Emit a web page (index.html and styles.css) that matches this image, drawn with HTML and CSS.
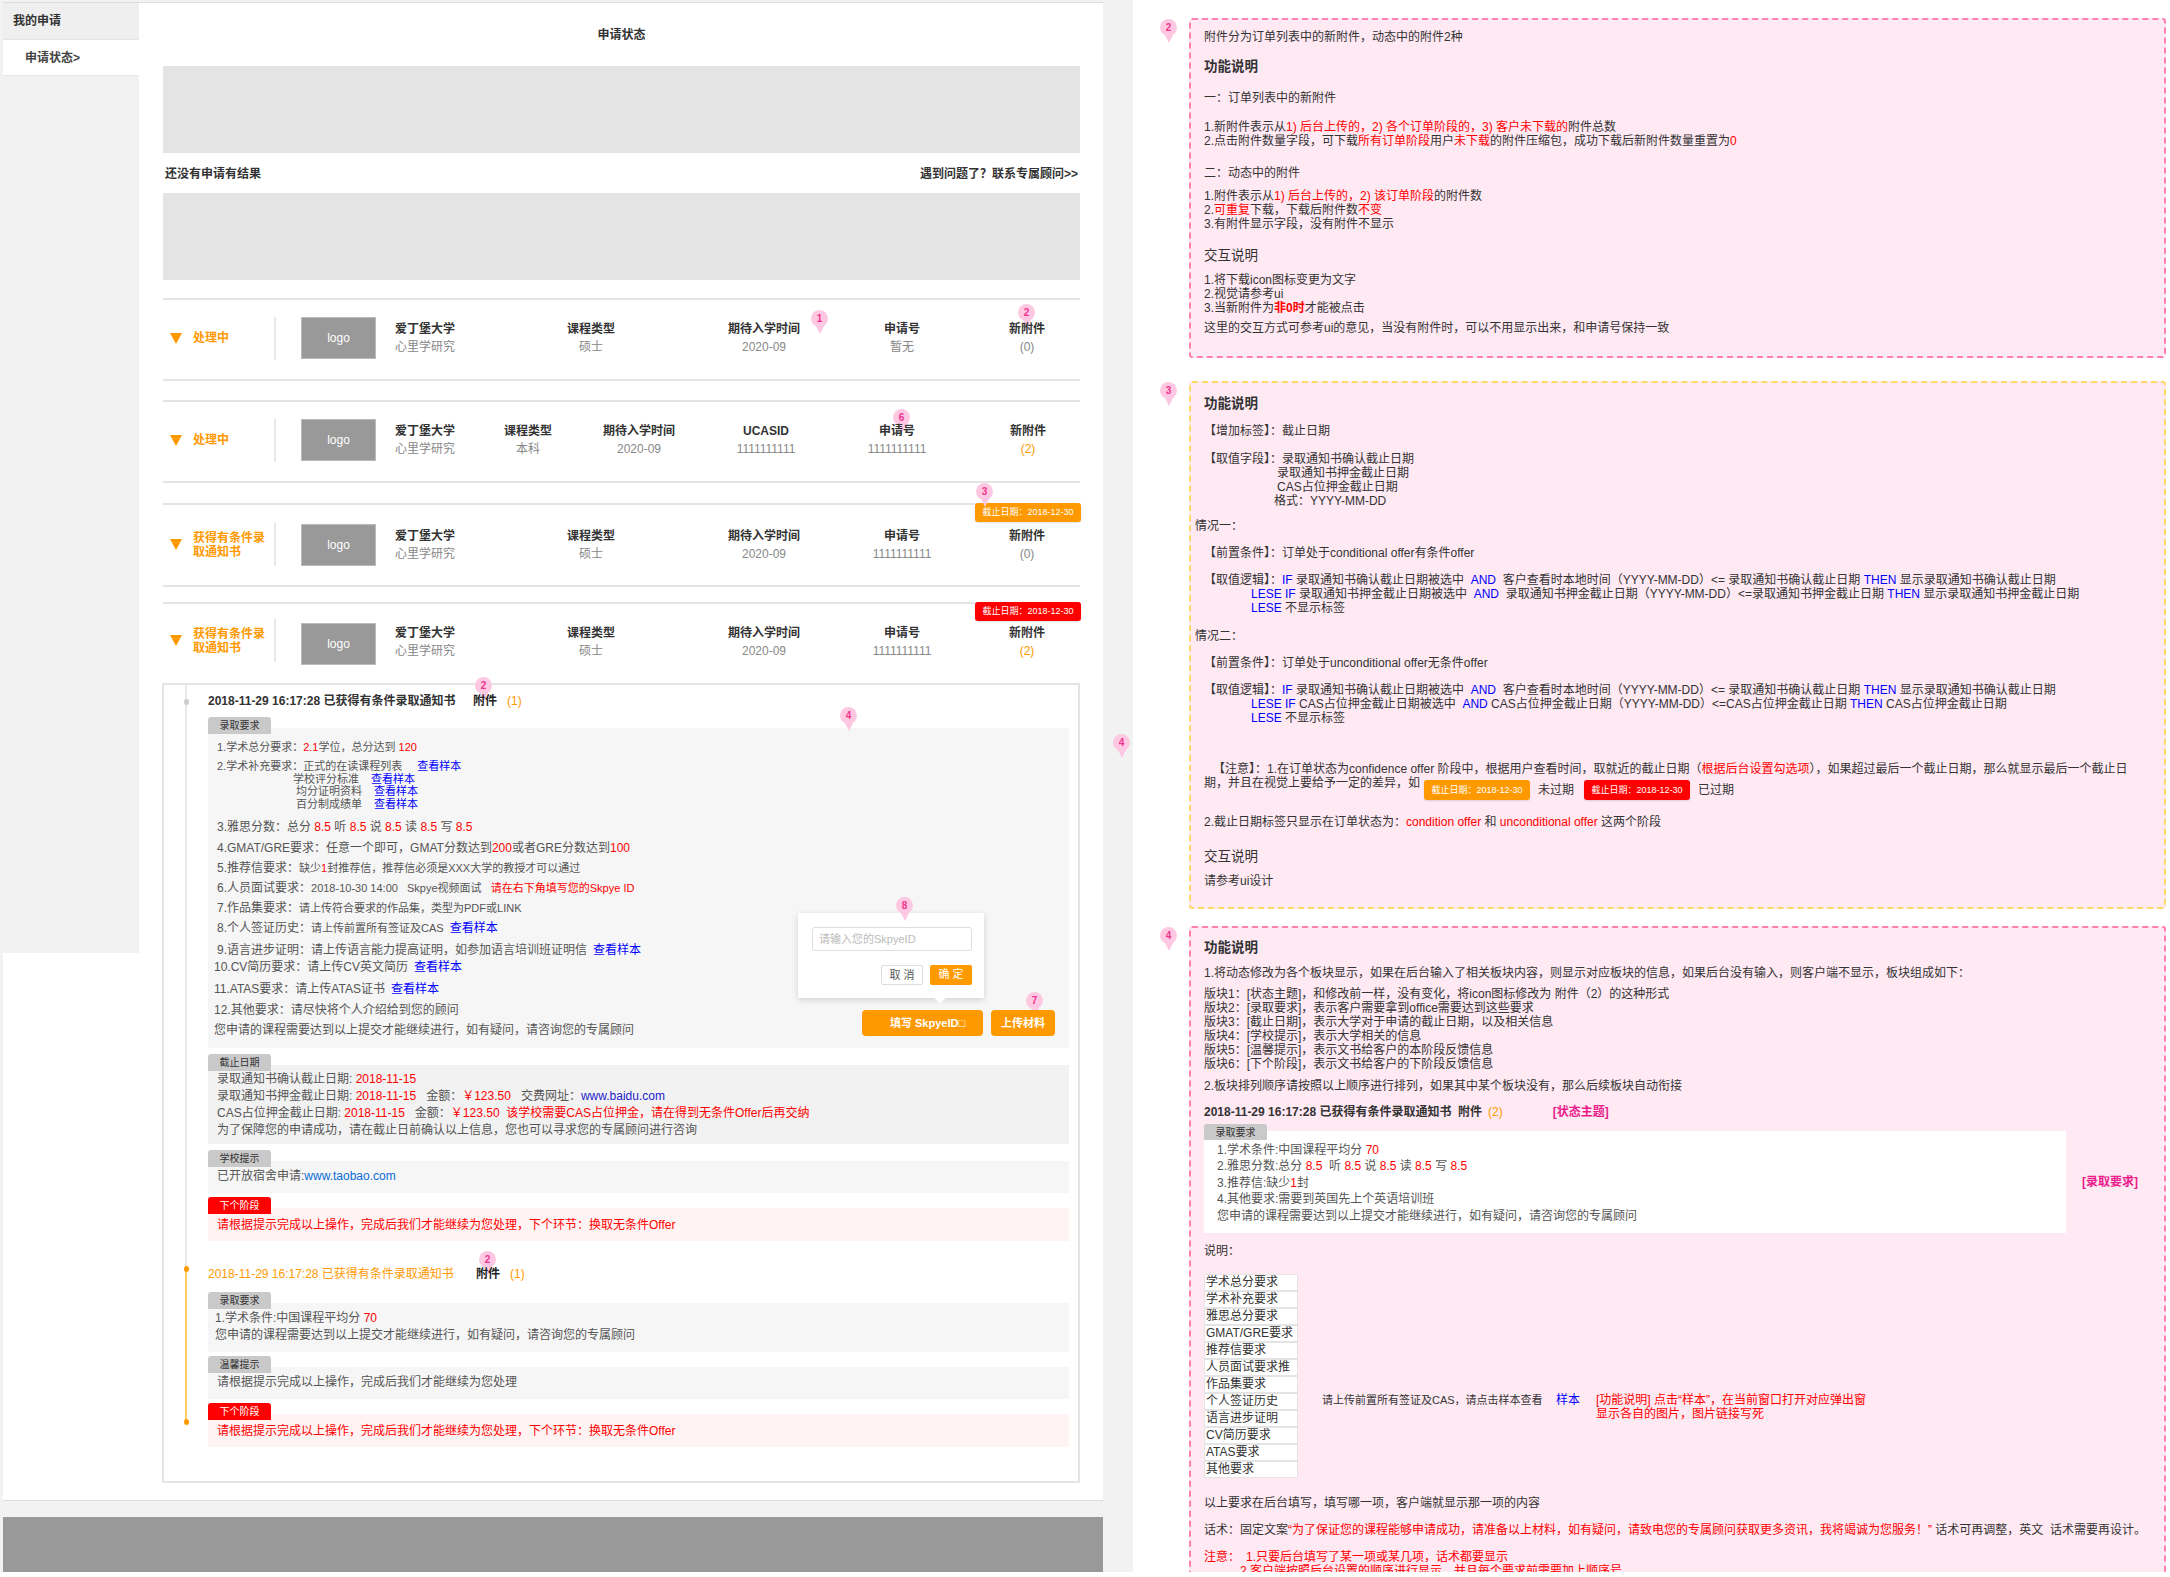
FILE: index.html
```html
<!DOCTYPE html>
<html lang="zh-CN">
<head>
    <meta charset="UTF-8">
    <title>申请状态</title>
    <link rel="stylesheet" href="styles.css">
</head>
<body>
<div class="page">
    <div class="proto">
        <div class="panel">
            <aside class="sidebar">
                <div class="side-head">我的申请</div>
                <div class="side-item">申请状态&gt;</div>
            </aside>
            <main class="content">
                <h1 class="title">申请状态</h1>
                <div class="banner"></div>
                <div class="summary">
                    <span>还没有申请有结果</span>
                    <span>遇到问题了&#xFF1F;联系专属顾问&gt;&gt;</span>
                </div>
                <div class="banner"></div>

                <section class="row row-a row-first">
                    <div class="status"><i class="tri"></i><span>处理中</span></div>
                    <div class="logo">logo</div>
                    <div class="cell cell-left"><b>爱丁堡大学</b><span>心里学研究</span></div>
                    <div class="cell"><b>课程类型</b><span>硕士</span></div>
                    <div class="cell"><b>期待入学时间</b><span>2020-09</span></div>
                    <div class="cell"><b>申请号</b><span>暂无</span></div>
                    <div class="cell cell-last"><b>新附件</b><span>(0)</span></div>
                    <div class="pin pin-r1a">1</div>
                    <div class="pin pin-r1b">2</div>
                </section>

                <section class="row row-b">
                    <div class="status"><i class="tri"></i><span>处理中</span></div>
                    <div class="logo">logo</div>
                    <div class="cell cell-left"><b>爱丁堡大学</b><span>心里学研究</span></div>
                    <div class="cell"><b>课程类型</b><span>本科</span></div>
                    <div class="cell"><b>期待入学时间</b><span>2020-09</span></div>
                    <div class="cell"><b>UCASID</b><span>1111111111</span></div>
                    <div class="cell"><b>申请号</b><span>1111111111</span></div>
                    <div class="cell cell-last"><b>新附件</b><span class="orange">(2)</span></div>
                    <div class="pin pin-r2">6</div>
                </section>

                <section class="row row-a row-tall">
                    <div class="status"><i class="tri"></i><span>获得有条件录<br>取通知书</span></div>
                    <div class="logo">logo</div>
                    <div class="cell cell-left"><b>爱丁堡大学</b><span>心里学研究</span></div>
                    <div class="cell"><b>课程类型</b><span>硕士</span></div>
                    <div class="cell"><b>期待入学时间</b><span>2020-09</span></div>
                    <div class="cell"><b>申请号</b><span>1111111111</span></div>
                    <div class="cell cell-last"><b>新附件</b><span>(0)</span></div>
                    <div class="due due-orange due-corner">截止日期&#xFF1A;2018-12-30</div>
                    <div class="pin pin-r3">3</div>
                </section>

                <section class="row row-a row-open">
                    <div class="status"><i class="tri"></i><span>获得有条件录<br>取通知书</span></div>
                    <div class="logo">logo</div>
                    <div class="cell cell-left"><b>爱丁堡大学</b><span>心里学研究</span></div>
                    <div class="cell"><b>课程类型</b><span>硕士</span></div>
                    <div class="cell"><b>期待入学时间</b><span>2020-09</span></div>
                    <div class="cell"><b>申请号</b><span>1111111111</span></div>
                    <div class="cell cell-last"><b>新附件</b><span class="orange">(2)</span></div>
                    <div class="due due-red due-corner">截止日期&#xFF1A;2018-12-30</div>
                </section>

                <section class="detail">
                    <div class="pin pin-d1">2</div>
                    <div class="pin pin-d2">4</div>
                    <div class="pin pin-d3">2</div>

                    <div class="event">
                        <i class="dot dot-gray"></i>
                        <div class="event-head">
                            <span class="event-time">2018-11-29 16:17:28 已获得有条件录取通知书</span>
                            <b class="attach">附件</b><span class="orange">(1)</span>
                        </div>

                        <div class="tag">录取要求</div>
                        <div class="block block-req">
                            <p class="s11">1.学术总分要求&#xFF1A;<em>2.1</em>学位&#xFF0C;总分达到 <em>120</em></p>
                            <p class="s11 tight mt-6">2.学术补充要求&#xFF1A;正式的在读课程列表<a class="lnk-1">查看样本</a><br>
                                <span class="ind-1">学校评分标准</span><a class="lnk-2">查看样本</a><br>
                                <span class="ind-2">均分证明资料</span><a class="lnk-2">查看样本</a><br>
                                <span class="ind-2">百分制成绩单</span><a class="lnk-2">查看样本</a></p>
                            <p class="mt-9">3.雅思分数&#xFF1A;总分 <em>8.5</em> 听 <em>8.5</em> 说 <em>8.5</em> 读 <em>8.5</em> 写 <em>8.5</em></p>
                            <p class="mt-7">4.GMAT/GRE要求&#xFF1A;任意一个即可&#xFF0C;GMAT分数达到<em>200</em>或者GRE分数达到<em>100</em></p>
                            <p class="mt-6">5.推荐信要求&#xFF1A;<span class="s11">缺少<em>1</em>封推荐信&#xFF0C;推荐信必须是XXX大学的教授才可以通过</span></p>
                            <p class="mt-6">6.人员面试要求&#xFF1A;<span class="s11">2018-10-30 14:00 &nbsp;&nbsp;Skpye视频面试 &nbsp;&nbsp;<em>请在右下角填写您的Skpye ID</em></span></p>
                            <p class="mt-6">7.作品集要求&#xFF1A;<span class="s11">请上传符合要求的作品集&#xFF0C;类型为PDF或LINK</span></p>
                            <p class="mt-6">8.个人签证历史&#xFF1A;<span class="s11">请上传前置所有签证及CAS</span><a class="lnk-3">查看样本</a></p>
                            <p class="mt-8">9.语言进步证明&#xFF1A;请上传语言能力提高证明&#xFF0C;如参加语言培训班证明信<a class="lnk-3">查看样本</a></p>
                            <p class="mt-3 out">10.CV简历要求&#xFF1A;请上传CV英文简历<a class="lnk-3">查看样本</a></p>
                            <p class="mt-8 out">11.ATAS要求&#xFF1A;请上传ATAS证书<a class="lnk-3">查看样本</a></p>
                            <p class="mt-7 out">12.其他要求&#xFF1A;请尽快将个人介绍给到您的顾问</p>
                            <p class="mt-6 out">您申请的课程需要达到以上提交才能继续进行&#xFF0C;如有疑问&#xFF0C;请咨询您的专属顾问</p>

                            <div class="popup">
                                <div class="popup-input">请输入您的SkpyeID</div>
                                <div class="popup-btns">
                                    <span class="btn-cancel">取 消</span>
                                    <span class="btn-ok">确 定</span>
                                </div>
                            </div>
                            <div class="pin pin-p8">8</div>
                            <div class="pin pin-p7">7</div>
                            <div class="actions">
                                <span class="action action-wide">填写 SkpyeID□</span>
                                <span class="action">上传材料</span>
                            </div>
                        </div>

                        <div class="tag tag-next">截止日期</div>
                        <div class="block block-date">
                            <p>录取通知书确认截止日期: <em>2018-11-15</em></p>
                            <p>录取通知书押金截止日期: <em>2018-11-15</em> &nbsp; 金额&#xFF1A;<em>&#xFFE5;123.50</em> &nbsp; 交费网址&#xFF1A;<a class="navy">www.baidu.com</a></p>
                            <p>CAS占位押金截止日期: <em>2018-11-15</em> &nbsp; 金额&#xFF1A;<em>&#xFFE5;123.50</em> &nbsp;<em>该学校需要CAS占位押金&#xFF0C;请在得到无条件Offer后再交纳</em></p>
                            <p>为了保障您的申请成功&#xFF0C;请在截止日前确认以上信息&#xFF0C;您也可以寻求您的专属顾问进行咨询</p>
                        </div>

                        <div class="tag tag-next">学校提示</div>
                        <div class="block block-one">
                            <p>已开放宿舍申请:<a class="sky">www.taobao.com</a></p>
                        </div>

                        <div class="tag tag-red tag-close">下个阶段</div>
                        <div class="block block-one block-red">
                            <p>请根据提示完成以上操作&#xFF0C;完成后我们才能继续为您处理&#xFF0C;下个环节&#xFF1A;换取无条件Offer</p>
                        </div>
                    </div>

                    <div class="event event-active">
                        <i class="dot dot-top"></i>
                        <i class="dot dot-end"></i>
                        <div class="event-head">
                            <span class="event-time orange">2018-11-29 16:17:28 已获得有条件录取通知书</span>
                            <b class="attach attach-2">附件</b><span class="orange">(1)</span>
                        </div>

                        <div class="tag tag-first">录取要求</div>
                        <div class="block block-short">
                            <p>1.学术条件:中国课程平均分 <em>70</em></p>
                            <p>您申请的课程需要达到以上提交才能继续进行&#xFF0C;如有疑问&#xFF0C;请咨询您的专属顾问</p>
                        </div>

                        <div class="tag tag-close">温馨提示</div>
                        <div class="block block-one">
                            <p>请根据提示完成以上操作&#xFF0C;完成后我们才能继续为您处理</p>
                        </div>

                        <div class="tag tag-red tag-close">下个阶段</div>
                        <div class="block block-one block-red">
                            <p>请根据提示完成以上操作&#xFF0C;完成后我们才能继续为您处理&#xFF0C;下个环节&#xFF1A;换取无条件Offer</p>
                        </div>
                    </div>
                </section>
            </main>
        </div>
        <div class="band"></div>
        <div class="footer"></div>
    </div>

    <div class="gutter"><div class="pin pin-g">4</div></div>

    <div class="notes">
        <section class="note note-attach">
            <div class="pin">2</div>
            <p>附件分为订单列表中的新附件&#xFF0C;动态中的附件2种</p>
            <h3 class="mt-14">功能说明</h3>
            <p class="mt-15">一&#xFF1A;订单列表中的新附件</p>
            <p class="mt-15">1.新附件表示从<em>1) 后台上传的&#xFF0C;2) 各个订单阶段的&#xFF0C;3) 客户未下载的</em>附件总数<br>
                2.点击附件数量字段&#xFF0C;可下载<em>所有订单阶段</em>用户<em>未下载</em>的附件压缩包&#xFF0C;成功下载后新附件数量重置为<em>0</em></p>
            <p class="mt-18">二&#xFF1A;动态中的附件</p>
            <p class="mt-9">1.附件表示从<em>1) 后台上传的&#xFF0C;2) 该订单阶段</em>的附件数<br>
                2.<em>可重复</em>下载&#xFF0C;下载后附件数<em>不变</em><br>
                3.有附件显示字段&#xFF0C;没有附件不显示</p>
            <h3 class="mt-16 plain">交互说明</h3>
            <p class="mt-8">1.将下载icon图标变更为文字<br>
                2.视觉请参考ui<br>
                3.当新附件为<em class="strong">非0时</em>才能被点击</p>
            <p class="mt-6">这里的交互方式可参考ui的意见&#xFF0C;当没有附件时&#xFF0C;可以不用显示出来&#xFF0C;和申请号保持一致</p>
        </section>

        <section class="note note-date">
            <div class="pin">3</div>
            <h3>功能说明</h3>
            <p class="mt-11">【增加标签】&#xFF1A;截止日期</p>
            <p class="mt-14">【取值字段】&#xFF1A;录取通知书确认截止日期<br>
                <span class="ind-3">录取通知书押金截止日期</span><br>
                <span class="ind-3">CAS占位押金截止日期</span><br>
                <span class="ind-4">格式&#xFF1A;YYYY-MM-DD</span></p>
            <p class="mt-11 outdent">情况一&#xFF1A;</p>
            <p class="mt-13">【前置条件】&#xFF1A;订单处于conditional offer有条件offer</p>
            <p class="mt-13">【取值逻辑】&#xFF1A;<a class="blue">IF</a> 录取通知书确认截止日期被选中&nbsp; <a class="blue">AND</a>&nbsp; 客户查看时本地时间&#xFF08;YYYY-MM-DD&#xFF09;&lt;= 录取通知书确认截止日期 <a class="blue">THEN</a> 显示录取通知书确认截止日期<br>
                <span class="ind-5"><a class="blue">LESE IF</a> 录取通知书押金截止日期被选中&nbsp; <a class="blue">AND</a>&nbsp; 录取通知书押金截止日期&#xFF08;YYYY-MM-DD&#xFF09;&lt;=录取通知书押金截止日期 <a class="blue">THEN</a> 显示录取通知书押金截止日期</span><br>
                <span class="ind-5"><a class="blue">LESE</a> 不显示标签</span></p>
            <p class="mt-14 outdent">情况二&#xFF1A;</p>
            <p class="mt-13">【前置条件】&#xFF1A;订单处于unconditional offer无条件offer</p>
            <p class="mt-13">【取值逻辑】&#xFF1A;<a class="blue">IF</a> 录取通知书确认截止日期被选中&nbsp; <a class="blue">AND</a>&nbsp; 客户查看时本地时间&#xFF08;YYYY-MM-DD&#xFF09;&lt;= 录取通知书确认截止日期 <a class="blue">THEN</a> 显示录取通知书确认截止日期<br>
                <span class="ind-5"><a class="blue">LESE IF</a> CAS占位押金截止日期被选中&nbsp; <a class="blue">AND</a> CAS占位押金截止日期&#xFF08;YYYY-MM-DD&#xFF09;&lt;=CAS占位押金截止日期 <a class="blue">THEN</a> CAS占位押金截止日期</span><br>
                <span class="ind-5"><a class="blue">LESE</a> 不显示标签</span></p>
            <p class="mt-37 nowrap"><span class="ind-6">【注意】&#xFF1A;1.在订单状态为confidence offer 阶段中&#xFF0C;根据用户查看时间&#xFF0C;取就近的截止日期&#xFF08;<em>根据后台设置勾选项</em>&#xFF09;&#xFF0C;如果超过最后一个截止日期&#xFF0C;那么就显示最后一个截止日</span></p>
            <div class="due-line">
                <span>期&#xFF0C;并且在视觉上要给予一定的差异&#xFF0C;如</span>
                <span class="due due-orange">截止日期&#xFF1A;2018-12-30</span>
                <span class="due-text">未过期</span>
                <span class="due due-red">截止日期&#xFF1A;2018-12-30</span>
                <span class="due-text">已过期</span>
            </div>
            <p class="mt-15">2.截止日期标签只显示在订单状态为&#xFF1A;<em>condition offer</em> 和 <em>unconditional offer</em> 这两个阶段</p>
            <h3 class="mt-19 plain">交互说明</h3>
            <p class="mt-8">请参考ui设计</p>
        </section>

        <section class="note note-block">
            <div class="pin">4</div>
            <h3>功能说明</h3>
            <p class="mt-9">1.将动态修改为各个板块显示&#xFF0C;如果在后台输入了相关板块内容&#xFF0C;则显示对应板块的信息&#xFF0C;如果后台没有输入&#xFF0C;则客户端不显示&#xFF0C;板块组成如下&#xFF1A;</p>
            <p class="mt-7">版块1&#xFF1A;[状态主题]&#xFF0C;和修改前一样&#xFF0C;没有变化&#xFF0C;将icon图标修改为 附件&#xFF08;2&#xFF09;的这种形式<br>
                版块2&#xFF1A;[录取要求]&#xFF0C;表示客户需要拿到office需要达到这些要求<br>
                版块3&#xFF1A;[截止日期]&#xFF0C;表示大学对于申请的截止日期&#xFF0C;以及相关信息<br>
                版块4&#xFF1A;[学校提示]&#xFF0C;表示大学相关的信息<br>
                版块5&#xFF1A;[温馨提示]&#xFF0C;表示文书给客户的本阶段反馈信息<br>
                版块6&#xFF1A;[下个阶段]&#xFF0C;表示文书给客户的下阶段反馈信息</p>
            <p class="mt-8">2.板块排列顺序请按照以上顺序进行排列&#xFF0C;如果其中某个板块没有&#xFF0C;那么后续板块自动衔接</p>
            <p class="mt-12 sample-head"><b>2018-11-29 16:17:28 已获得有条件录取通知书 &nbsp;附件</b><span class="orange">(2)</span><span class="hot">[状态主题]</span></p>
            <div class="tag sample-tag">录取要求</div>
            <div class="sample">
                <div class="sample-box">
                    <p>1.学术条件:中国课程平均分 <em>70</em></p>
                    <p>2.雅思分数:总分 <em>8.5</em>&nbsp; 听 <em>8.5</em> 说 <em>8.5</em> 读 <em>8.5</em> 写 <em>8.5</em></p>
                    <p>3.推荐信:缺少<em>1</em>封</p>
                    <p>4.其他要求:需要到英国先上个英语培训班</p>
                    <p>您申请的课程需要达到以上提交才能继续进行&#xFF0C;如有疑问&#xFF0C;请咨询您的专属顾问</p>
                </div>
                <span class="hot">[录取要求]</span>
            </div>
            <p class="mt-11">说明&#xFF1A;</p>
            <div class="req-table">
                <ul class="req-list">
                    <li>学术总分要求</li>
                    <li>学术补充要求</li>
                    <li>雅思总分要求</li>
                    <li>GMAT/GRE要求</li>
                    <li>推荐信要求</li>
                    <li>人员面试要求推</li>
                    <li>作品集要求</li>
                    <li>个人签证历史</li>
                    <li>语言进步证明</li>
                    <li>CV简历要求</li>
                    <li>ATAS要求</li>
                    <li>其他要求</li>
                </ul>
                <div class="req-note">
                    <span class="req-text">请上传前置所有签证及CAS&#xFF0C;请点击样本查看</span>
                    <a class="blue req-link">样本</a>
                    <em class="req-func">[功能说明] 点击“样本”&#xFF0C;在当前窗口打开对应弹出窗显示各自的图片&#xFF0C;图片链接写死</em>
                </div>
            </div>
            <p class="mt-18">以上要求在后台填写&#xFF0C;填写哪一项&#xFF0C;客户端就显示那一项的内容</p>
            <p class="mt-13">话术&#xFF1A;固定文案<em>“为了保证您的课程能够申请成功&#xFF0C;请准备以上材料&#xFF0C;如有疑问&#xFF0C;请致电您的专属顾问获取更多资讯&#xFF0C;我将竭诚为您服务&#xFF01;”</em> 话术可再调整&#xFF0C;英文&nbsp; 话术需要再设计。</p>
            <p class="mt-13"><em>注意&#xFF1A;<span class="ind-7">1.只要后台填写了某一项或某几项&#xFF0C;话术都要显示</span><br>
                <span class="ind-8">2.客户端按照后台设置的顺序进行显示&#xFF0C;并且每个要求前需要加上顺序号</span></em></p>
        </section>
    </div>
</div>
</body>
</html>
```

FILE: styles.css
```css
* {
    box-sizing: border-box;
}
body {
    margin: 0;
    background: #fff;
    font-family: "Liberation Sans", "Noto Sans CJK SC", sans-serif;
    font-size: 12px;
    line-height: 14px;
    color: #555;
}
p, h1, h3, ul {
    margin: 0;
    padding: 0;
}
em {
    font-style: normal;
    color: #f00;
}
b {
    font-weight: 700;
}
.orange {
    color: #f90;
}
.nowrap {
    white-space: nowrap;
}

.page {
    display: flex;
    height: 1572px;
    overflow: hidden;
}
.proto {
    width: 1103px;
    flex-shrink: 0;
    display: flex;
    flex-direction: column;
    padding-left: 3px;
    background: #f2f2f2;
}
.gutter {
    position: relative;
    width: 30px;
    flex-shrink: 0;
    background: #f2f2f2;
}
.notes {
    flex: 1;
    min-width: 0;
    padding: 18px 4px 0 56px;
    color: #333;
}

/* left prototype */
.panel {
    display: flex;
    height: 1499px;
    margin-top: 2px;
    background: #fff;
    border-top: 1px solid #ddd;
    border-bottom: 1px solid #ddd;
}
.sidebar {
    width: 136px;
    height: 950px;
    flex-shrink: 0;
    background: #f2f2f2;
}
.side-head {
    height: 37px;
    padding: 11px 10px 0;
    background: #efefef;
    border-bottom: 1px solid #e4e4e4;
    font-weight: 700;
    color: #333;
}
.side-item {
    height: 36px;
    padding: 11px 22px;
    background: #fff;
    border-bottom: 1px solid #e8e8e8;
    font-weight: 700;
    color: #444;
}
.content {
    flex: 1;
    padding: 0 23px 0 24px;
}
.title {
    height: 63px;
    padding-top: 25px;
    font-size: 12px;
    font-weight: 700;
    text-align: center;
    color: #333;
}
.banner {
    height: 87px;
    background: #e4e4e4;
}
.summary {
    display: flex;
    justify-content: space-between;
    align-items: center;
    height: 40px;
    padding: 2px 2px 0;
    font-weight: 700;
    color: #333;
}

/* order rows */
.row {
    position: relative;
    display: grid;
    align-items: center;
    height: 83px;
    margin-top: 20px;
    padding-bottom: 3px;
    border-top: 2px solid #e4e4e4;
    border-bottom: 2px solid #e4e4e4;
}
.row-first {
    margin-top: 18px;
}
.row-a {
    grid-template-columns: 113px 100px 130px 170px 176px 100px 1fr;
}
.row-b {
    grid-template-columns: 113px 100px 107px 90px 132px 122px 140px 1fr;
    margin-top: 19px;
}
.row-tall {
    height: 84px;
    padding-top: 2px;
}
.row-open {
    height: 81px;
    margin-top: 15px;
    padding-bottom: 0;
    border-bottom: 0;
}
.row-open .cell {
    margin-bottom: 4px;
}
.row-open .status {
    margin-bottom: 6px;
}
.status {
    display: flex;
    align-items: center;
    height: 43px;
    padding-left: 7px;
    border-right: 2px solid #e8e8e8;
    font-weight: 700;
    color: #f90;
}
.tri {
    width: 0;
    height: 0;
    margin-right: 11px;
    border-top: 11px solid #f90;
    border-left: 6.5px solid transparent;
    border-right: 6.5px solid transparent;
}
.logo {
    width: 75px;
    height: 42px;
    margin-left: 25px;
    background: #999;
    border: 1px solid #bbb;
    line-height: 40px;
    text-align: center;
    color: #fff;
}
.cell {
    position: relative;
    z-index: 2;
    display: flex;
    flex-direction: column;
    align-items: center;
    line-height: 18px;
    color: #888;
}
.cell b {
    color: #333;
}
.cell-left {
    align-items: flex-start;
    padding-left: 19px;
}
.cell-last {
    padding-left: 22px;
}
.row-b .cell-last {
    padding-left: 9px;
}
.due {
    width: 106px;
    height: 19px;
    background: #f90;
    border-radius: 3px;
    font-size: 9px;
    line-height: 19px;
    text-align: center;
    color: #fff;
    box-shadow: 0 1px 2px rgba(0,0,0,0.12);
}
.due-red {
    background: #f00;
}
.due-corner {
    position: absolute;
    top: -2px;
    right: -1px;
}
.due-line {
    display: flex;
    height: 24px;
}
.due-line .due {
    height: 20px;
    margin: 4px 0 0 4px;
    line-height: 20px;
}
.due-line .due-red {
    margin-left: 10px;
}
.due-text {
    margin: 7px 0 0 8px;
}

/* timeline box */
.detail {
    position: relative;
    height: 800px;
    margin-left: -1px;
    padding: 0 9px 0 44px;
    border: 2px solid #e4e4e4;
}
.event {
    position: relative;
    padding-top: 9px;
    height: 581px;
}
.event::before {
    content: "";
    position: absolute;
    left: -23px;
    top: 0;
    bottom: 0;
    width: 2px;
    background: #e8e8e8;
}
.event-active {
    padding-top: 1px;
    height: 180px;
}
.event-active::before {
    background: #fc6;
    top: 2px;
    bottom: 25px;
}
.dot {
    position: absolute;
    left: -24.5px;
    width: 5px;
    height: 6px;
    border-radius: 50%;
    background: #f90;
}
.dot-gray {
    top: 14px;
    background: #ccc;
}
.dot-top {
    top: 0;
}
.dot-end {
    top: 153px;
}
.event-head {
    position: relative;
    z-index: 2;
    display: flex;
    font-weight: 700;
    color: #333;
}
.event-time {
    width: 265px;
}
.attach {
    width: 34px;
    color: #222;
}
.attach-2 {
    width: 34px;
    margin-left: 3px;
}
.event-head .orange {
    font-weight: 400;
}

.tag {
    position: relative;
    z-index: 1;
    width: 63px;
    height: 17px;
    margin: 9px 0 -6px 0;
    background: #c9c9c9;
    border-radius: 3px 3px 0 0;
    font-size: 10px;
    line-height: 17px;
    text-align: center;
    color: #333;
}
.tag-next {
    margin-top: 6px;
}
.tag-close {
    margin-top: 4px;
}
.tag-first {
    margin-top: 11px;
}
.tag-red {
    background: #f00;
    color: #fff;
}
.block {
    padding: 12px 9px 10px;
    background: #f6f6f6;
}
.block-req {
    position: relative;
    height: 320px;
}
.block-date {
    padding-top: 6px;
    padding-bottom: 5px;
    background: #f2f2f2;
}
.block-date p, .block-short p {
    line-height: 17px;
}
.block-one {
    padding-top: 8px;
}
.block-red {
    padding: 10px 9px 9px;
    background: #fff3f3;
    color: #f00;
}
.block-short {
    padding: 7px 7px 8px;
}
.s11 {
    font-size: 11px;
}
.tight {
    line-height: 12.7px;
}
.out {
    margin-left: -3px;
}
a {
    color: #00f;
}
.navy {
    color: #22c;
}
.sky {
    color: #0a6cd6;
}
.blue {
    color: #00f;
}
.lnk-1 {
    margin-left: 15px;
}
.lnk-2 {
    margin-left: 12px;
}
.lnk-3 {
    margin-left: 6px;
}
.ind-1 {
    margin-left: 76px;
}
.ind-2 {
    margin-left: 79px;
}

.mt-3 { margin-top: 3px; }
.mt-6 { margin-top: 6px; }
.mt-7 { margin-top: 7px; }
.mt-8 { margin-top: 8px; }
.mt-9 { margin-top: 9px; }
.mt-11 { margin-top: 11px; }
.mt-12 { margin-top: 12px; }
.mt-13 { margin-top: 13px; }
.mt-14 { margin-top: 14px; }
.mt-15 { margin-top: 15px; }
.mt-16 { margin-top: 16px; }
.mt-18 { margin-top: 18px; }
.mt-19 { margin-top: 19px; }
.mt-37 { margin-top: 37px; }

/* skype popup */
.popup {
    position: absolute;
    left: 590px;
    top: 185px;
    width: 186px;
    height: 85px;
    padding: 14px 12px 0 14px;
    background: #fff;
    box-shadow: 0 2px 6px rgba(0,0,0,0.15);
}
.popup::after {
    content: "";
    position: absolute;
    left: 138px;
    bottom: -4px;
    width: 8px;
    height: 8px;
    background: #fff;
    transform: rotate(45deg);
}
.popup-input {
    height: 24px;
    padding-left: 6px;
    border: 1px solid #ddd;
    border-radius: 3px;
    font-size: 11px;
    line-height: 22px;
    color: #bbb;
}
.popup-btns {
    display: flex;
    justify-content: flex-end;
    gap: 7px;
    margin-top: 14px;
}
.btn-cancel, .btn-ok {
    width: 42px;
    height: 20px;
    border-radius: 2px;
    font-size: 11px;
    line-height: 19px;
    text-align: center;
}
.btn-cancel {
    border: 1px solid #ddd;
    color: #555;
}
.btn-ok {
    background: #f90;
    color: #fff;
}
.actions {
    position: absolute;
    z-index: 2;
    right: 14px;
    bottom: 12px;
    display: flex;
    gap: 8px;
}
.action {
    width: 64px;
    height: 26px;
    background: #f90;
    border-radius: 4px;
    font-size: 11px;
    font-weight: 700;
    line-height: 26px;
    text-align: center;
    color: #fff;
}
.action-wide {
    width: 121px;
    padding-left: 10px;
}

/* annotation panels */
.note {
    position: relative;
    padding: 10px 10px 21px 13px;
    background: #ffe9f3;
    border: 2px dashed #ff7fb0;
    border-radius: 3px;
}
.note-date {
    margin-top: 23px;
    padding-top: 12px;
    padding-bottom: 19px;
    border-color: #ffd966;
}
.note-block {
    margin-top: 17px;
    padding-top: 11px;
    height: 800px;
}
.note h3 {
    font-size: 13.5px;
    font-weight: 700;
    line-height: 18px;
    color: #333;
}
.note h3.plain {
    font-weight: 400;
}
.strong {
    font-weight: 700;
}
.outdent {
    margin-left: -9px;
}
.ind-3 {
    margin-left: 73px;
}
.ind-4 {
    margin-left: 70px;
}
.ind-5 {
    margin-left: 47px;
}
.ind-6 {
    margin-left: 9px;
}
.ind-7 {
    margin-left: 6px;
}
.ind-8 {
    margin-left: 36px;
}
.sample-head {
    font-weight: 700;
}
.sample-head .orange {
    margin-left: 6px;
    font-weight: 400;
}
.hot {
    font-weight: 700;
    color: #ec1c8c;
}
.sample-head .hot {
    margin-left: 50px;
}
.sample-tag {
    margin: 5px 0 -9px;
    height: 16px;
}
.sample {
    display: flex;
    align-items: center;
    gap: 16px;
}
.sample-box {
    width: 862px;
    height: 102px;
    padding: 11px 13px 0;
    background: #fff;
    line-height: 16.4px;
    color: #555;
}
.req-table {
    display: flex;
    margin-top: 16px;
}
.req-list {
    width: 94px;
    flex-shrink: 0;
    list-style: none;
}
.req-list li {
    height: 17px;
    padding-left: 1px;
    background: #fff;
    border: 1px solid #e4e4e4;
    line-height: 15px;
    white-space: nowrap;
}
.req-note {
    display: flex;
    margin: 119px 0 0 24px;
}
.req-text {
    width: 234px;
    font-size: 11px;
    white-space: nowrap;
}
.req-link {
    width: 40px;
}
.req-func {
    width: 270px;
}

/* numbered markers */
.pin {
    position: absolute;
    z-index: 1;
    width: 17px;
    height: 17px;
    font-size: 10px;
    font-weight: 700;
    line-height: 17px;
    text-align: center;
    color: #f0338f;
}
.pin::before {
    content: "";
    position: absolute;
    left: 0;
    top: 0;
    width: 17px;
    height: 17px;
    background: #ffc8e2;
    border-radius: 50%;
    z-index: -1;
}
.pin::after {
    content: "";
    position: absolute;
    left: 2.5px;
    top: 12px;
    border-top: 12px solid #ffc8e2;
    border-left: 6px solid transparent;
    border-right: 6px solid transparent;
    z-index: -1;
}
.pin-r1a { left: 648px; top: 10px; }
.pin-r1b { left: 855px; top: 4px; }
.pin-r2 { left: 730px; top: 7px; }
.pin-r3 { left: 813px; top: -22px; }
.pin-d1 { left: 311px; top: -8px; }
.pin-d2 { left: 676px; top: 22px; }
.pin-d3 { left: 315px; top: 566px; }
.pin-p8 { left: 688px; top: 169px; }
.pin-p7 { left: 818px; top: 264px; }
.pin-g { left: 10px; top: 734px; }
.note > .pin { left: -31px; top: -1px; }

.band {
    height: 16px;
}
.footer {
    height: 55px;
    background: #999;
}
```
